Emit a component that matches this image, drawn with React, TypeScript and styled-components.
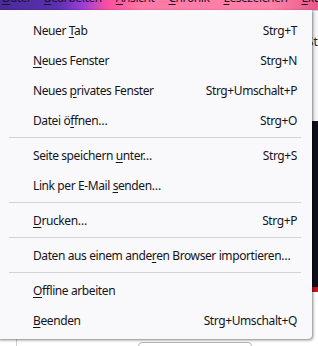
import React from 'react';
import styled, {createGlobalStyle} from 'styled-components';

const GlobalStyle = createGlobalStyle`
  html, body {
    margin: 0;
    padding: 0;
    width: 318px;
    height: 346px;
    overflow: hidden;
    background: #ffffff;
    font-family: 'Noto Sans', 'DejaVu Sans', sans-serif;
  }
`;

interface Entry {
  pre: string;
  key: string;
  post: string;
  shortcut?: string;
}

type Row = Entry | 'sep';

const rows: Row[] = [
  {pre: 'Neuer ', key: 'T', post: 'ab', shortcut: 'Strg+T'},
  {pre: '', key: 'N', post: 'eues Fenster', shortcut: 'Strg+N'},
  {pre: 'Neues ', key: 'p', post: 'rivates Fenster', shortcut: 'Strg+Umschalt+P'},
  {pre: 'Datei ö', key: 'f', post: 'fnen…', shortcut: 'Strg+O'},
  'sep',
  {pre: 'Seite speichern ', key: 'u', post: 'nter…', shortcut: 'Strg+S'},
  {pre: 'Link per E-Mail ', key: 's', post: 'enden…'},
  'sep',
  {pre: '', key: 'D', post: 'rucken…', shortcut: 'Strg+P'},
  'sep',
  {pre: 'Daten aus einem ande', key: 'r', post: 'en Browser importieren…'},
  'sep',
  {pre: '', key: 'O', post: 'ffline arbeiten'},
  {pre: '', key: 'B', post: 'eenden', shortcut: 'Strg+Umschalt+Q'},
];

const barItems = [
  ['D', 'atei'],
  ['B', 'earbeiten'],
  ['A', 'nsicht'],
  ['C', 'hronik'],
  ['L', 'esezeichen'],
  ['E', 'xtras'],
];

export default function App() {
  return (
    <>
      <GlobalStyle />
      <Frame>
        <MenuBar>
          {barItems.map(([k, rest]) => (
            <BarItem key={k}>
              <Key>{k}</Key>
              {rest}
            </BarItem>
          ))}
        </MenuBar>
        <PageBody>
          <Toolbar>
            <Snippet>Strg</Snippet>
          </Toolbar>
          <DarkPanel />
          <RedStripe />
          <Lower>
            <Rule />
            <GhostButton />
          </Lower>
        </PageBody>

        <Popup>
          {rows.map((r, i) =>
            r === 'sep' ? (
              <Separator key={i} />
            ) : (
              <Item key={i}>
                <span>
                  {r.pre}
                  <Key>{r.key}</Key>
                  {r.post}
                </span>
                {r.shortcut && <Shortcut>{r.shortcut}</Shortcut>}
              </Item>
            ),
          )}
        </Popup>
      </Frame>
    </>
  );
}

const Frame = styled.div`
  position: relative;
  width: 318px;
  height: 346px;
  overflow: hidden;
  background: #ffffff;
`;

const MenuBar = styled.div`
  height: 10px;
  display: flex;
  align-items: flex-end;
  gap: 14px;
  padding-left: 2px;
  overflow: hidden;
  background: linear-gradient(
    90deg,
    #4a2b98 0%,
    #5a30b0 18%,
    #9a3ed6 26%,
    #ff4f9e 34%,
    #ff7aa6 45%,
    #ff82a8 85%,
    #e8588a 100%
  );
`;

const BarItem = styled.span`
  flex: none;
  font-size: 12px;
  letter-spacing: -0.4px;
  line-height: 16px;
  margin-bottom: 4px;
  color: #1b1230;
  white-space: nowrap;
`;

const Key = styled.u`
  text-decoration: underline;
  text-underline-offset: 2px;
`;

const PageBody = styled.div`
  display: flex;
  flex-direction: column;
`;

const Toolbar = styled.div`
  height: 110px;
  display: flex;
  align-items: center;
  justify-content: flex-end;
  border-top: 1px solid #ccc;
  background: #f6f6f8;
`;

const Snippet = styled.span`
  font-size: 12px;
  color: #222;
  margin-right: -12px;
  margin-top: -50px;
`;

const DarkPanel = styled.div`
  height: 166px;
  background: #0e0e1c;
`;

const RedStripe = styled.div`
  height: 5px;
  background: #c4141c;
`;

const Lower = styled.div`
  position: relative;
  height: 60px;
  background: #ffffff;
`;

const Rule = styled.div`
  position: absolute;
  left: 16px;
  top: 0;
  bottom: 0;
  width: 1px;
  background: #d0d0d4;
`;

const GhostButton = styled.div`
  position: absolute;
  left: 138px;
  top: 50px;
  width: 112px;
  height: 20px;
  border: 1px solid #b8b8bc;
  border-radius: 4px;
`;

const Popup = styled.div`
  position: absolute;
  top: 10px;
  left: -4px;
  width: 316px;
  box-sizing: border-box;
  padding: 5px 0 4px;
  background: #f9f9fb;
  border-radius: 0 0 4px 4px;
  box-shadow: 1px 1px 3px rgba(0, 0, 0, 0.5);
  color: #15141a;
  font-size: 12px;
  letter-spacing: -0.4px;
`;

const Item = styled.div`
  height: 30px;
  display: flex;
  align-items: center;
  justify-content: space-between;
  padding: 0 15px 0 37px;
  white-space: nowrap;
`;

const Shortcut = styled.span`
  margin-left: 20px;
`;

const Separator = styled.div`
  height: 1px;
  margin: 2px 11px 2px 13px;
  background: #d3d3d7;
`;
